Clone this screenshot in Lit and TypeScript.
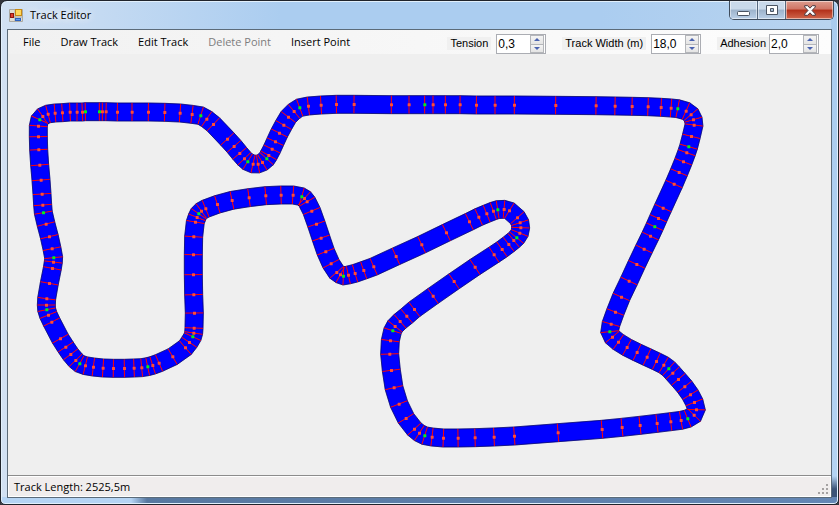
import { LitElement, html, css, svg } from "lit";
import { customElement, property } from "lit/decorators.js";

type Pt = { x: number; y: number; control: boolean };

// Sections of the centre line in track units (three to a pixel), each relative
// to its own origin. A trailing 1 marks a control point.
const SECTIONS: { origin: [number, number]; points: number[][] }[] = [
  {
    origin: [60, 285],
    points: [
      [60, 75, 1], [69, 65], [85, 58], [106, 55], [128, 54], [151, 52], [172, 52], [188, 52], [197, 51, 1],
      [239, 51, 1], [248, 51], [259, 51], [293, 52], [337, 52], [386, 52], [435, 53], [481, 55], [517, 59],
      [543, 63, 1], [561, 73], [581, 89],
    ],
  },
  {
    origin: [540, 285],
    points: [
      [143, 133], [163, 155], [180, 176], [194, 192], [204, 201, 1], [220, 208], [235, 208], [248, 203],
      [261, 192, 1], [267, 182], [277, 163], [287, 141], [299, 115], [312, 91], [326, 67], [343, 50],
      [360, 39, 1], [386, 34], [424, 31], [470, 29], [523, 29], [635, 30],
    ],
  },
  {
    origin: [1200, 0],
    points: [
      [28, 315], [75, 315, 1], [100, 315], [137, 315], [181, 315], [230, 316], [286, 316], [344, 316], [468, 317],
    ],
  },
  {
    origin: [1740, 270],
    points: [
      [49, 48], [106, 49], [157, 50], [205, 51], [244, 53], [274, 55], [294, 57, 1], [319, 64], [334, 75],
      [341, 90], [343, 106], [335, 140], [327, 171, 1], [321, 189], [311, 216], [298, 248], [283, 283],
      [250, 355], [236, 386], [225, 411, 1], [212, 439], [193, 478], [171, 524],
    ],
  },
  {
    origin: [1740, 780],
    points: [
      [148, 64], [125, 112], [107, 157], [94, 193], [90, 216, 1], [98, 232], [116, 247], [142, 263],
      [172, 278], [202, 292], [230, 305], [252, 316], [267, 327, 1], [279, 340], [296, 359], [315, 381],
      [332, 405], [344, 428], [350, 450], [343, 466], [324, 477, 1], [304, 482], [273, 486], [232, 491],
      [181, 497], [127, 503], [67, 509], [-65, 519],
    ],
  },
  {
    origin: [1110, 540],
    points: [
      [434, 769], [373, 772], [316, 774], [265, 775], [221, 775], [187, 772], [165, 768, 1], [149, 760],
      [134, 748], [109, 716], [88, 673], [73, 624], [65, 572], [60, 523], [62, 483], [69, 453, 1], [76, 440],
      [91, 425], [111, 409], [134, 389], [190, 349], [253, 305], [316, 262], [373, 225], [397, 209],
      [417, 194], [432, 182], [441, 174, 1], [450, 160], [453, 144], [451, 129], [443, 114], [419, 93],
      [403, 89], [384, 90, 1], [371, 94], [351, 102], [327, 112], [299, 126], [230, 159], [156, 195], [79, 230],
    ],
  },
  {
    origin: [540, 285],
    points: [
      [582, 516], [552, 527], [526, 536], [506, 541], [491, 544, 1], [482, 540], [471, 533], [454, 507],
      [438, 471], [424, 430], [410, 388], [396, 349], [382, 321], [374, 311], [366, 306, 1], [340, 301],
      [304, 301], [258, 303], [208, 309], [157, 317], [113, 329], [78, 342], [65, 349], [57, 357, 1],
      [52, 368], [47, 382], [42, 426], [41, 480], [41, 540],
    ],
  },
  {
    origin: [60, 690],
    points: [
      [522, 195], [524, 250], [523, 295], [522, 310], [519, 321, 1], [509, 338], [497, 354], [459, 381],
      [418, 400], [399, 407], [384, 411, 1], [366, 414], [343, 415], [314, 416], [281, 416], [250, 415],
      [221, 412], [197, 408], [180, 402, 1], [168, 392], [153, 374], [138, 352], [122, 327], [96, 277],
      [86, 256], [81, 240, 1], [80, 226], [81, 207], [89, 161], [98, 116], [101, 97], [102, 84, 1], [97, 57],
      [89, 21],
    ],
  },
  {
    origin: [60, 285],
    points: [
      [79, 388], [71, 354, 1], [69, 331], [67, 298], [64, 256], [60, 211], [57, 165], [56, 126], [56, 94],
    ],
  },
];

const HALF_WIDTH = 27;

const centre: Pt[] = SECTIONS.flatMap(({ origin: [ox, oy], points }) =>
  points.map(([x, y, c]) => ({ x: ox + x, y: oy + y, control: c === 1 }))
);

// Cross lines stand at right angles to the line through both neighbours.
const ribs = centre.map((p, i) => {
  const a = centre[(i + centre.length - 1) % centre.length];
  const b = centre[(i + 1) % centre.length];
  const dx = b.x - a.x;
  const dy = b.y - a.y;
  const len = Math.hypot(dx, dy);
  const nx = (-dy / len) * HALF_WIDTH;
  const ny = (dx / len) * HALF_WIDTH;
  const cx = p.x - 1;
  const cy = p.y - 1;
  return { l: [cx + nx, cy + ny], r: [cx - nx, cy - ny] };
});

@customElement("track-view")
export class TrackView extends LitElement {
  static styles = css`
    :host { display: block; }
    .track { display: block; width: 100%; height: auto; }
    .road { fill: #0000ff; stroke: #0000ff; stroke-width: 1; }
    .edge { fill: none; stroke: #000050; stroke-width: 2; }
    .rib { stroke: #ff0000; stroke-width: 3; }
    .dot { fill: #ff4d33; }
    .dot.control { fill: #00f020; }
  `;

  render() {
    const next = (i: number) => ribs[(i + 1) % ribs.length];
    return html`<svg class="track" viewBox="24 162 2469 1263" role="img" aria-label="Track">
      ${ribs.map((r, i) => {
        const n = next(i);
        return svg`<polygon class="road" points="${[r.l, n.l, n.r, r.r].map((q) => q.join(",")).join(" ")}"></polygon>`;
      })}
      <polygon class="edge" points=${ribs.map((r) => r.l.join(",")).join(" ")}></polygon>
      <polygon class="edge" points=${ribs.map((r) => r.r.join(",")).join(" ")}></polygon>
      ${ribs.map((r) => svg`<line class="rib" x1=${r.l[0]} y1=${r.l[1]} x2=${r.r[0]} y2=${r.r[1]}></line>`)}
      ${centre.map((p) =>
        svg`<rect class=${p.control ? "dot control" : "dot"} x=${p.x - 5} y=${p.y - 5} width="9" height="9" rx="1"></rect>`
      )}
    </svg>`;
  }
}

@customElement("number-field")
export class NumberField extends LitElement {
  @property() label = "";
  @property() value = "";

  static styles = css`
    :host { display: flex; align-items: flex-start; gap: 5px; font: 11px/13px "Liberation Sans", Arial, sans-serif; }
    :host([tight]) { gap: 0; }
    label { background: #f0f0f0; padding: 0 3px; margin-top: 3px; color: #000; white-space: nowrap; }
    .box { display: flex; box-sizing: border-box; width: 50px; height: 20px; border: 1px solid #abadb3; background: #fff; }
    input { flex: 1; min-width: 0; border: 0; padding: 0 0 1px 1px; background: none; outline: 0; color: #000;
      font: 12px/16px "Liberation Sans", Arial, sans-serif; }
    .spin { display: flex; flex-direction: column; width: 14px; margin-right: 1px; background: #b4b6ba; gap: 1px; padding: 1px; box-sizing: border-box; }
    button { flex: 1; display: flex; align-items: center; justify-content: center; padding: 0; border: 0; min-height: 0;
      background: linear-gradient(#f4f4f4, #e4e4e4); }
    svg { display: block; width: 6px; height: 3px; fill: #4a63b0; }
  `;

  render() {
    return html`<label for="value">${this.label}</label>
      <div class="box">
        <input id="value" type="text" inputmode="decimal" .value=${this.value} />
        <div class="spin">
          <button aria-label="Increase"><svg viewBox="0 0 6 3"><path d="M0 3 3 0 6 3z" /></svg></button>
          <button aria-label="Decrease"><svg viewBox="0 0 6 3"><path d="M0 0 3 3 6 0z" /></svg></button>
        </div>
      </div>`;
  }
}

@customElement("app-root")
export class AppRoot extends LitElement {
  static styles = css`
    :host { display: block; background: #34353c; color: #000; font: 11px/16px "Open Sans", "Noto Sans", sans-serif; }
    .window {
      box-sizing: border-box; min-height: 100vh; display: flex; flex-direction: column;
      border: 1px solid #20242c; border-radius: 7px 7px 5px 5px; padding: 0 6px 6px;
      background:
        linear-gradient(90deg, #b5d4f4 0 130px, #5878a0 146px, #6486b4 100%) bottom / 100% 7px no-repeat,
        linear-gradient(#a9cbee 0, #b4d3f3 475px, #3c5478 488px) right / 7px 100% no-repeat,
        linear-gradient(90deg, #d2e1f3 0, #c4daf2 100px, #abcdf0 280px, #abcdf0 600px, #b9d4ef 100%);
      box-shadow: inset 0 0 0 1px #e2f0fc;
    }
    .title { display: flex; align-items: flex-start; height: 28px; }
    .title svg { margin: 7px 7px 0 2px; }
    h1 { flex: 1; margin: 5px 0 0; font: inherit; line-height: 18px; text-shadow: 0 0 8px #fff, 0 0 8px #fff; }
    .caption { display: flex; border: 1px solid #3f4c5c; border-top: 0; border-radius: 0 0 5px 5px; overflow: hidden; margin-right: -2px; }
    .caption button { width: 28px; height: 18px; padding: 0; border: 0; border-right: 1px solid #55687e; display: flex;
      align-items: center; justify-content: center; box-shadow: inset 0 0 0 1px #ffffff80;
      background: linear-gradient(#c9d9ea 0 45%, #9db3cb 50%, #bad0e8); }
    .caption .close { width: 47px; border-right: 0; background: linear-gradient(#dd9c8e 0, #cf7464 45%, #b2301a 50%, #d0674c); }
    .caption svg { margin: 0; display: block; }
    .client { flex: 1; display: flex; flex-direction: column; border: 1px solid #5c6b79; background: #efefef; }
    .bar { display: flex; height: 24px; align-items: flex-start; background: linear-gradient(90deg, #f1f1f1, #fdfdfd); padding: 0 12px 0 15px; }
    nav { flex: 1; display: flex; gap: 20px; padding-top: 4px; }
    nav button { border: 0; padding: 0; background: none; font: inherit; color: #000; white-space: nowrap; }
    nav button:disabled { color: #7d7d7d; }
    .fields { display: flex; gap: 16px; padding-top: 4px; }
    .stage { flex: 1; }
    .status { display: flex; justify-content: space-between; align-items: flex-end; height: 22px; box-sizing: border-box;
      border-top: 1px solid #8c8c8c; box-shadow: inset 0 0 0 1px #fff; background: #f0eded; padding: 0 2px 2px 6px; }
  `;

  render() {
    return html`<div class="window">
      <header class="title">
        <svg width="14" height="14" viewBox="0 0 14 14" aria-hidden="true">
          <path d="M.5 1.5h13v12H.5zM6 1v12M0 9h14" fill="#e0ddd4" stroke="#aaa9a2" />
          <rect x="6.5" y="1.5" width="6" height="6" fill="#ffd75a" stroke="#c78a14" />
          <rect x="1.5" y="5.5" width="3" height="4" fill="#e03c2c" stroke="#8e1510" />
          <rect x="6.5" y="10.5" width="5" height="2" fill="#5f9cf0" stroke="#2c62c0" />
        </svg>
        <h1>Track Editor</h1>
        <div class="caption">
          <button aria-label="Minimize"><svg width="13" height="14" viewBox="0 0 13 14"><rect x=".5" y="8.5" width="12" height="4" rx="1" fill="#fff" stroke="#4b5563" /></svg></button>
          <button aria-label="Maximize"><svg width="12" height="10" viewBox="0 0 12 10"><path d="M.5.5h11v9H.5zM4.500 3.500v3h3v-3z" fill="#fff" fill-rule="evenodd" stroke="#4b5563" /></svg></button>
          <button class="close" aria-label="Close"><svg width="12" height="11" viewBox="0 0 12 11"><path d="M.7.7h3L6 3.200 8.300.7h3v1.300L8 5.500l3.300 3.500v1.300h-3L6 7.800 3.700 10.300h-3V9L4 5.500.7 2z" fill="#fff" stroke="#4b3a40" /></svg></button>
        </div>
      </header>
      <main class="client">
        <div class="bar">
          <nav aria-label="Main menu">
            <button>File</button><button>Draw Track</button><button>Edit Track</button>
            <button disabled>Delete Point</button><button>Insert Point</button>
          </nav>
          <div class="fields">
            <number-field label="Tension" value="0,3"></number-field>
            <number-field label="Track Width (m)" value="18,0"></number-field>
            <number-field tight label="Adhesion" value="2,0"></number-field>
          </div>
        </div>
        <track-view class="stage"></track-view>
        <footer class="status">
          <span>Track Length: 2525,5m</span>
          <svg width="11" height="11" viewBox="0 0 11 11" fill="#a5a2a2" aria-hidden="true">
            <path d="M8 0h2v2H8zM8 4h2v2H8zM8 8h2v2H8zM4 4h2v2H4zM4 8h2v2H4zM0 8h2v2H0z" />
          </svg>
        </footer>
      </main>
    </div>`;
  }
}
